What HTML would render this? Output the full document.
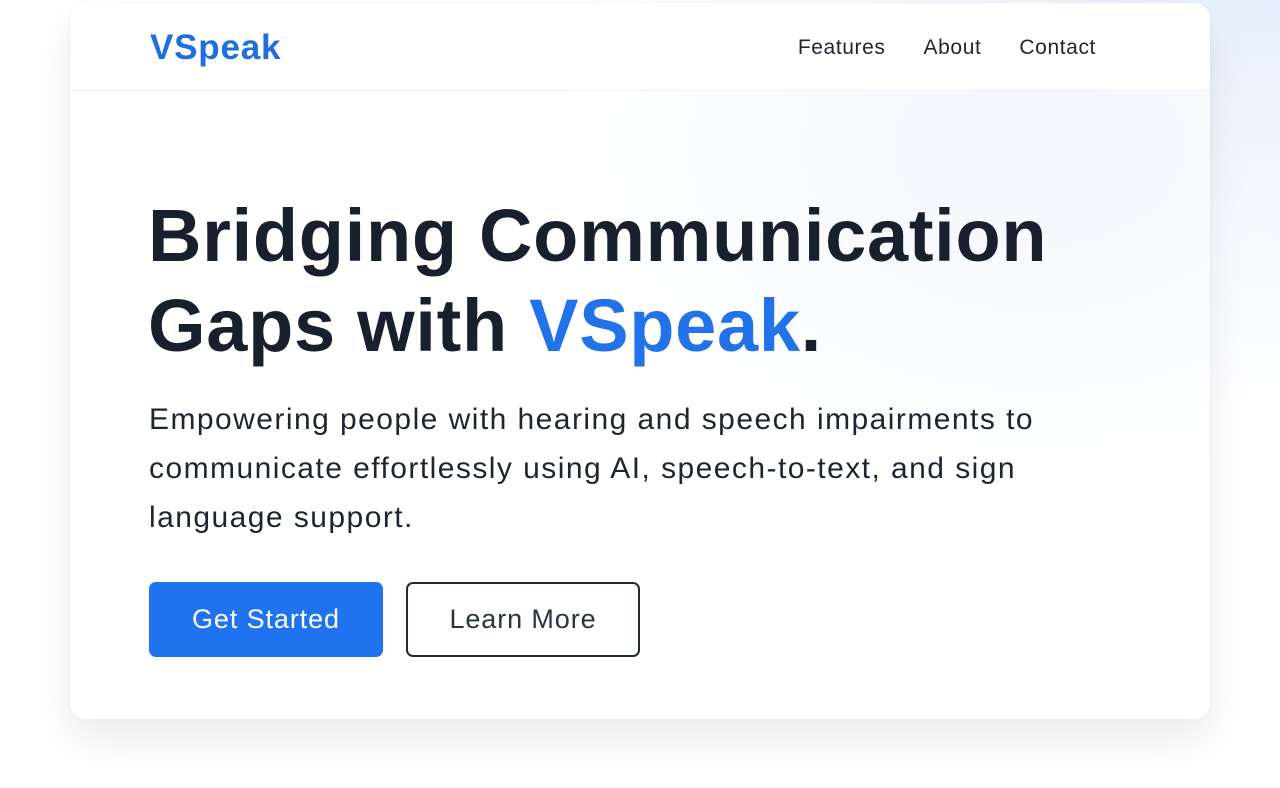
<!DOCTYPE html>
<html><head><style>
*{margin:0;padding:0;box-sizing:border-box}
body{width:1280px;height:788px;overflow:hidden;background:#fff;font-family:"Liberation Sans",sans-serif;position:relative}
.bg{position:absolute;right:0;top:0;width:700px;height:400px;background:radial-gradient(ellipse at 100% 0%,#e6effc 0%,rgba(240,245,253,0.6) 40%,rgba(255,255,255,0) 75%)}
.card{position:absolute;left:70px;top:3px;width:1140px;height:716px;border-radius:16px;background:radial-gradient(ellipse 500px 350px at 85% 20%,#f3f7fe 0%,rgba(255,255,255,0) 100%),#fff;box-shadow:0 20px 40px rgba(0,0,0,0.08),0 0 6px rgba(0,0,0,0.04);overflow:hidden}
.hdr{height:88px;border-bottom:1px solid #eef0f3;position:relative;background:#fff}
.logo{position:absolute;left:80px;top:25px;font-size:35px;font-weight:bold;color:#1f6fe0;letter-spacing:0.8px}
.nav{position:absolute;right:114px;top:33px;font-size:21px;color:#1f2530;letter-spacing:0.6px}
.nav span{margin-left:38px}
h1{position:absolute;left:78px;top:188px;font-size:74px;line-height:90px;font-weight:bold;color:#18202e;letter-spacing:0.7px}
h1 b{color:#2272ea}
p{position:absolute;left:79px;top:392px;font-size:30px;line-height:49px;color:#1f2530;width:930px;letter-spacing:1.45px}
.btn{position:absolute;top:579px;width:234px;height:75px;border-radius:7px;font-size:27px;letter-spacing:0.9px;display:flex;align-items:center;justify-content:center}
.b1{left:79px;background:#1f73ee;color:#fff}
.b2{left:336px;border:2px solid #222a36;color:#2a3342;background:#fff}
</style></head><body>
<div class="bg"></div>
<div class="card">
<div class="hdr"><div class="logo">VSpeak</div><div class="nav"><span>Features</span><span>About</span><span>Contact</span></div></div>
<h1>Bridging Communication<br>Gaps with <b>VSpeak</b>.</h1>
<p>Empowering people with hearing and speech impairments to communicate effortlessly using AI, speech-to-text, and sign language support.</p>
<div class="btn b1">Get Started</div>
<div class="btn b2">Learn More</div>
</div>
</body></html>
